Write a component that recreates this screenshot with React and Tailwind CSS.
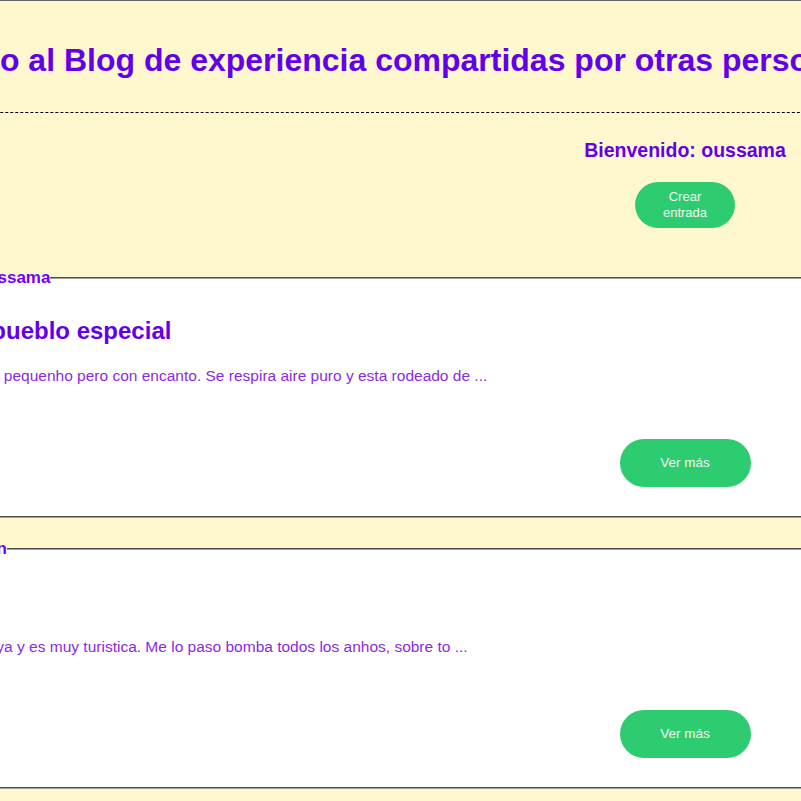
import React from 'react';

const posts = [
  {
    author: 'Autor: oussama',
    title: 'Un gran pueblo especial',
    body: 'Este pueblo es pequenho pero con encanto. Se respira aire puro y esta rodeado de ...',
    indent: 'ml-[3px]',
  },
  {
    author: 'Autor: Jon',
    title: 'Ibiza',
    body: 'Tiene una playa y es muy turistica. Me lo paso bomba todos los anhos, sobre to ...',
    indent: 'ml-[9px]',
  },
];

const PostCard = ({ post }) => (
  <fieldset className="bg-white border-2 [border-style:groove] border-[#a0a0a0] mb-[21px]">
    <legend className="ml-[39px] text-[17px] font-bold text-[#7000ff] leading-[19.5px]">
      {post.author}
    </legend>
    <div className="pl-[12px] pt-[29px] pb-[29px]">
      <h2 className="text-[24px] leading-[27.6px] font-bold text-[#6200ea] whitespace-nowrap">{post.title}</h2>
      <p className={`mt-[23px] ${post.indent} text-[15.5px] leading-[18px] text-[#8a2be2] whitespace-nowrap`}>{post.body}</p>
      <div className="flex justify-end pr-[78px] mt-[54px]">
        <div className="w-[230px] flex justify-center">
          <button className="w-[131px] h-[48px] rounded-full bg-[#2ecc71] text-[#f4f4f4] text-[13.5px]">
            Ver más
          </button>
        </div>
      </div>
    </div>
  </fieldset>
);

export default function App() {
  return (
    <div className="w-full min-h-screen overflow-hidden bg-[#fff7cd] font-['Liberation_Sans',Arial,sans-serif]">
      <div className="w-[1000px] ml-[-120px]">
        {/* Title */}
        <div className="border-t border-[#666]">
          <div className="pt-[41px] pb-[33px] border-b border-dashed border-black">
            <h1 className="ml-[-33px] text-[32px] leading-[37px] font-bold text-[#6200ea] whitespace-nowrap">
              Bienvenido al Blog de experiencia compartidas por otras personas
            </h1>
          </div>
        </div>

        {/* User box */}
        <div className="flex justify-end pr-[80px] pt-[26px] pb-[40px]">
          <div className="w-[230px] flex flex-col items-center">
            <h3 className="text-[19.5px] leading-[22.4px] font-bold text-[#6200ea] whitespace-nowrap">
              Bienvenido: oussama
            </h3>
            <button className="mt-[20.6px] w-[100px] h-[46px] rounded-full bg-[#2ecc71] text-[#f4f4f4] text-[13px] leading-[16px] px-[18px]">
              Crear entrada
            </button>
          </div>
        </div>

        {/* Posts */}
        {posts.map((post, i) => (
          <PostCard key={i} post={post} />
        ))}
      </div>
    </div>
  );
}
